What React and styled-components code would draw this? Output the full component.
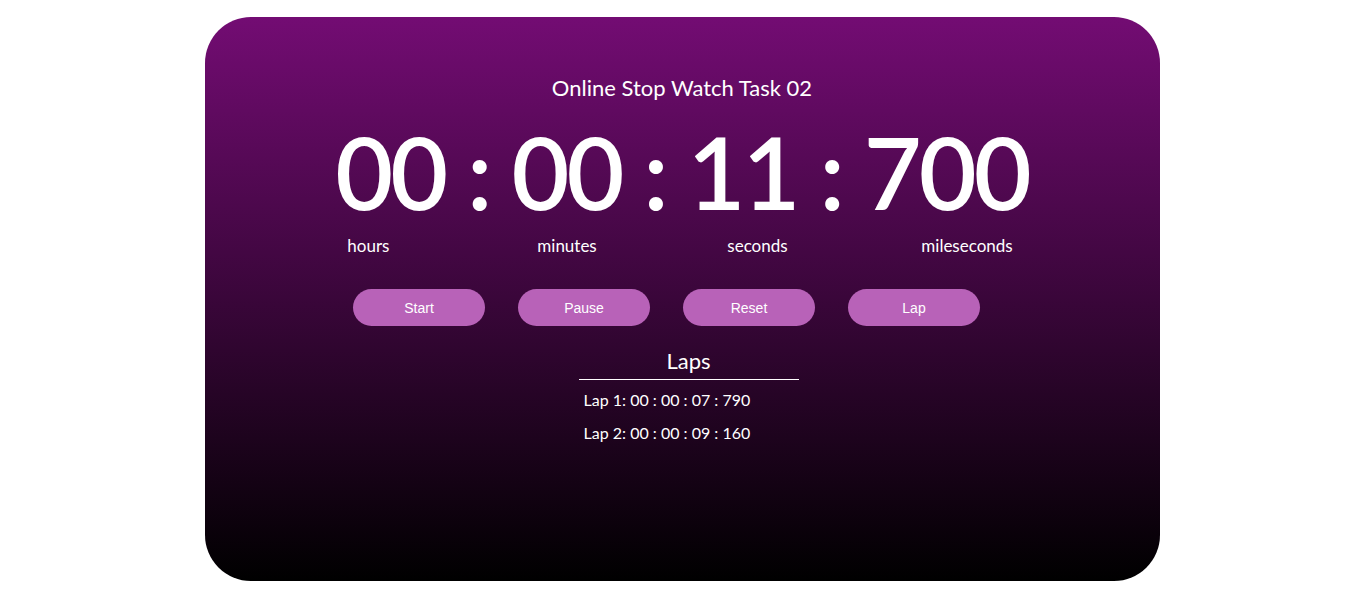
import React from 'react';
import styled, { createGlobalStyle } from 'styled-components';

const GlobalStyle = createGlobalStyle`
    body {
        margin: 0;
        background: #ffffff;
        font-family: 'Lato', 'Open Sans', sans-serif;
    }
`;

const Page = styled.div`
    display: flex;
    justify-content: center;
    padding-top: 17px;
`;

const Card = styled.div`
    width: 955px;
    height: 564px;
    border-radius: 46px;
    background: linear-gradient(180deg, #730c73 0%, #000000 100%);
    color: #ffffff;
    display: flex;
    flex-direction: column;
    align-items: center;
    box-sizing: border-box;
    padding-top: 56px;
`;

const Title = styled.h1`
    margin: 0;
    font-size: 22px;
    font-weight: 400;
    line-height: 30px;
`;

const Clock = styled.div`
    margin-top: 8px;
    font-size: 100px;
    font-weight: 600;
    line-height: 120px;
    letter-spacing: -3px;
    white-space: pre;
`;

const Units = styled.div`
    display: grid;
    grid-template-columns: 190px 190px 194px auto;
    margin-top: 3px;
    margin-left: -4px;
    font-size: 17px;
    line-height: 24px;
`;

const Buttons = styled.div`
    display: flex;
    margin-top: 31px;
`;

const Button = styled.button`
    width: 132px;
    height: 37px;
    margin: 0 32px 0 1px;
    border: none;
    border-radius: 19px;
    background: #b862b8;
    color: #ffffff;
    font-family: 'Liberation Sans', Arial, sans-serif;
    font-size: 14px;
    cursor: pointer;
`;

const Laps = styled.div`
    margin-top: 20px;
    margin-left: 13px;
    width: 220px;
`;

const LapsTitle = styled.h2`
    margin: 0;
    text-align: center;
    font-size: 22px;
    font-weight: 400;
    line-height: 30px;
    padding-bottom: 3px;
    border-bottom: 1px solid #ffffff;
`;

const LapList = styled.ul`
    list-style: none;
    margin: 3px 0 0;
    padding: 0 0 0 5px;
`;

const LapItem = styled.li`
    font-size: 16px;
    line-height: 33px;
`;

const laps = ['00 : 00 : 07 : 790', '00 : 00 : 09 : 160'];

export default function App() {
    return (
        <>
            <GlobalStyle />
            <Page>
                <Card>
                    <Title>Online Stop Watch Task 02</Title>
                    <Clock>00 : 00 : 11 : 700</Clock>
                    <Units>
                        <span>hours</span>
                        <span>minutes</span>
                        <span>seconds</span>
                        <span>mileseconds</span>
                    </Units>
                    <Buttons>
                        <Button>Start</Button>
                        <Button>Pause</Button>
                        <Button>Reset</Button>
                        <Button>Lap</Button>
                    </Buttons>
                    <Laps>
                        <LapsTitle>Laps</LapsTitle>
                        <LapList>
                            {laps.map((lap, i) => (
                                <LapItem key={i}>Lap {i + 1}: {lap}</LapItem>
                            ))}
                        </LapList>
                    </Laps>
                </Card>
            </Page>
        </>
    );
}
